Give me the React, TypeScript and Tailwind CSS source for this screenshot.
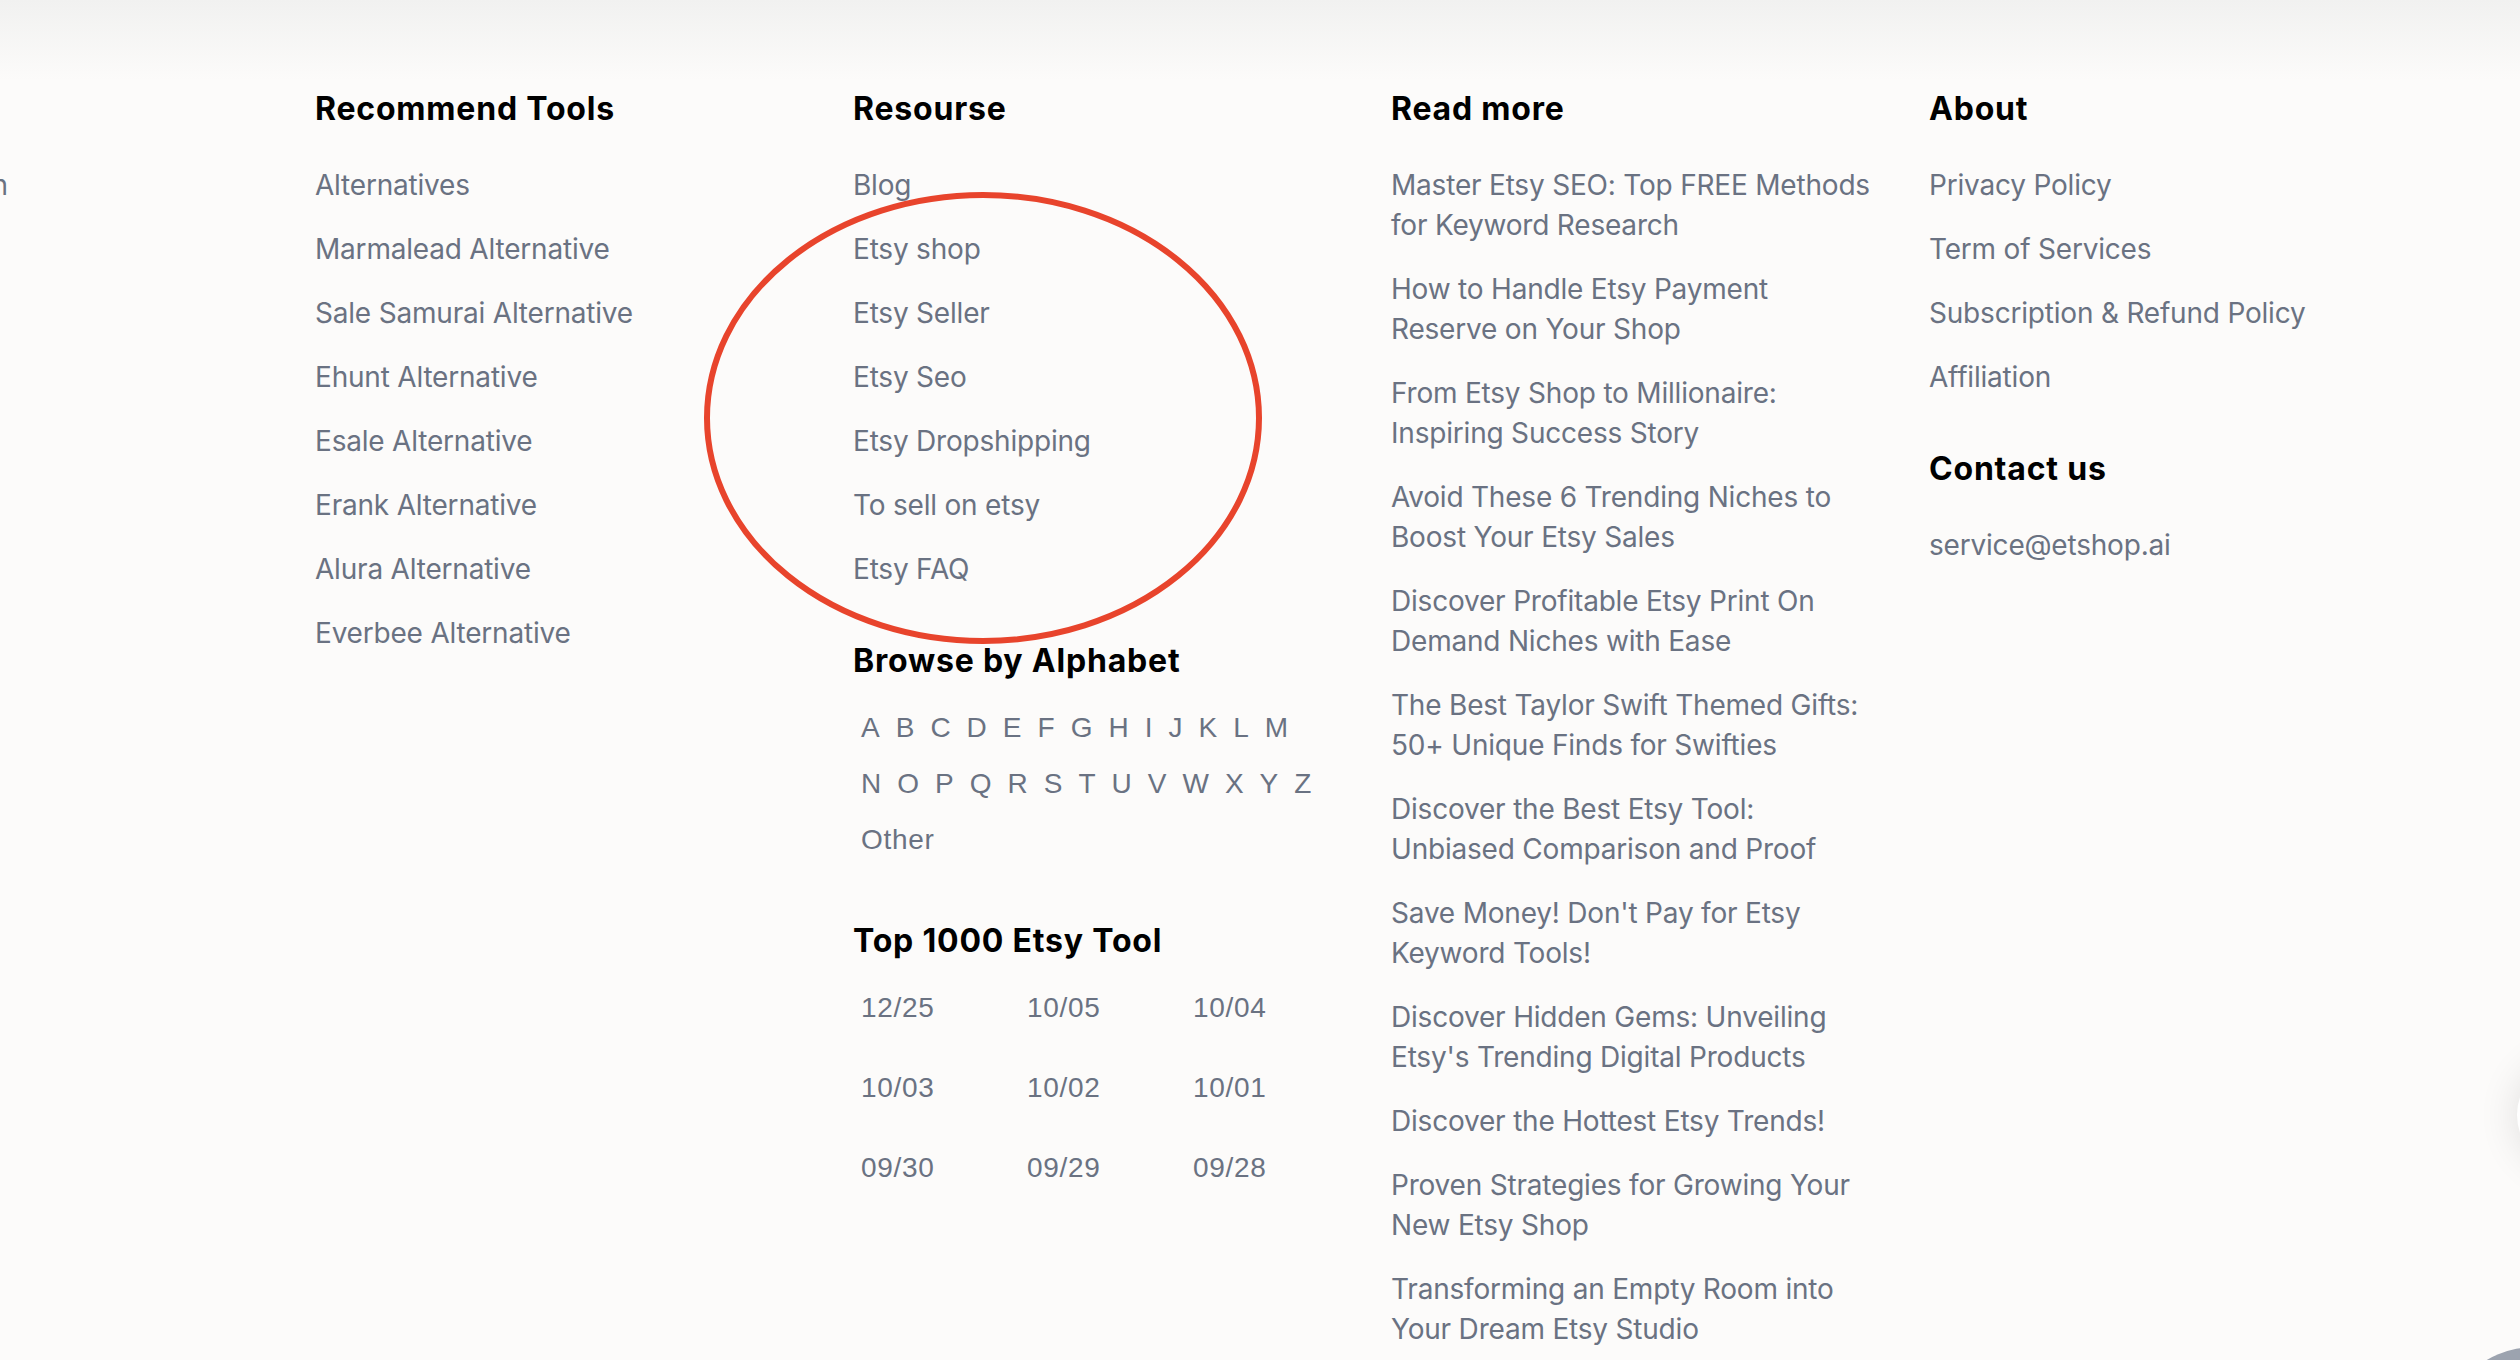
const recommend = [
  "Alternatives",
  "Marmalead Alternative",
  "Sale Samurai Alternative",
  "Ehunt Alternative",
  "Esale Alternative",
  "Erank Alternative",
  "Alura Alternative",
  "Everbee Alternative",
];

const resources = [
  "Blog",
  "Etsy shop",
  "Etsy Seller",
  "Etsy Seo",
  "Etsy Dropshipping",
  "To sell on etsy",
  "Etsy FAQ",
];

const readMore = [
  "Master Etsy SEO: Top FREE Methods for Keyword Research",
  "How to Handle Etsy Payment Reserve on Your Shop",
  "From Etsy Shop to Millionaire: Inspiring Success Story",
  "Avoid These 6 Trending Niches to Boost Your Etsy Sales",
  "Discover Profitable Etsy Print On Demand Niches with Ease",
  "The Best Taylor Swift Themed Gifts: 50+ Unique Finds for Swifties",
  "Discover the Best Etsy Tool: Unbiased Comparison and Proof",
  "Save Money! Don't Pay for Etsy Keyword Tools!",
  "Discover Hidden Gems: Unveiling Etsy's Trending Digital Products",
  "Discover the Hottest Etsy Trends!",
  "Proven Strategies for Growing Your New Etsy Shop",
  "Transforming an Empty Room into Your Dream Etsy Studio",
];

const about = [
  "Privacy Policy",
  "Term of Services",
  "Subscription & Refund Policy",
  "Affiliation",
];

const letterRows = ["ABCDEFGHIJKLM".split(""), "NOPQRSTUVWXYZ".split("")];

const dates = [
  "12/25",
  "10/05",
  "10/04",
  "10/03",
  "10/02",
  "10/01",
  "09/30",
  "09/29",
  "09/28",
];

function Heading({ children }: { children: React.ReactNode }) {
  return (
    <h3 className="text-[32px] leading-[40px] font-bold tracking-wide text-black">
      {children}
    </h3>
  );
}

function LinkList({ items, className = "" }: { items: string[]; className?: string }) {
  return (
    <ul className={"mt-[36px] flex flex-col gap-6 " + className}>
      {items.map((item) => (
        <li key={item}>
          <a
            href="#"
            className="text-[28px] leading-[40px] tracking-[-0.2px] text-gray-500 hover:text-gray-800"
          >
            {item}
          </a>
        </li>
      ))}
    </ul>
  );
}

export default function App() {
  return (
    <div className="relative h-[1360px] w-full overflow-hidden bg-[#fcfbfa] font-[Inter,sans-serif]">
      <div className="pointer-events-none absolute inset-x-0 top-0 h-[80px] bg-linear-to-b from-[#f1f1f0] to-transparent" />

      <footer className="-ml-[223px] flex pt-[89px]">
        {/* column cut off at the left edge */}
        <div className="w-[538px] shrink-0">
          <div className="mt-[76px] w-[231px] text-right text-[28px] leading-[40px] text-gray-500">
            Login
          </div>
        </div>

        <div className="w-[538px] shrink-0">
          <Heading>Recommend Tools</Heading>
          <LinkList items={recommend} />
        </div>

        <div className="w-[538px] shrink-0">
          <Heading>Resourse</Heading>
          <LinkList items={resources} />

          <div className="mt-[52px]">
            <Heading>Browse by Alphabet</Heading>
          </div>
          <div className="mt-[27px] flex flex-col gap-4 font-['Liberation_Sans',Arial,sans-serif] text-[28px] leading-[40px] text-gray-500">
            {letterRows.map((row, i) => (
              <div key={i} className="flex">
                {row.map((l) => (
                  <a key={l} href="#" className="px-2">
                    {l}
                  </a>
                ))}
              </div>
            ))}
            <div>
              <a href="#" className="px-2 tracking-wide">
                Other
              </a>
            </div>
          </div>

          <div className="mt-[61px]">
            <Heading>Top 1000 Etsy Tool</Heading>
          </div>
          <div className="mt-[27px] grid grid-cols-[166px_166px_166px] gap-y-10 font-['Liberation_Sans',Arial,sans-serif] text-[28px] leading-[40px] tracking-wide text-gray-500">
            {dates.map((d) => (
              <a key={d} href="#" className="px-2">
                {d}
              </a>
            ))}
          </div>
        </div>

        <div className="w-[538px] shrink-0">
          <Heading>Read more</Heading>
          <LinkList items={readMore} className="w-[482px]" />
        </div>

        <div className="w-[538px] shrink-0">
          <Heading>About</Heading>
          <LinkList items={about} />
          <div className="mt-[52px]">
            <Heading>Contact us</Heading>
          </div>
          <div className="mt-[36px] text-[28px] leading-[40px] tracking-[-0.2px] text-gray-500">
            service@etshop.ai
          </div>
        </div>
      </footer>

      {/* red annotation ring */}
      <svg
        className="pointer-events-none absolute left-[700px] top-[189px]"
        width="566"
        height="458"
        viewBox="0 0 566 458"
      >
        <ellipse cx="283" cy="229" rx="276" ry="223" fill="none" stroke="#e8442c" strokeWidth="6" />
      </svg>

      {/* floating buttons at the right edge */}
      <div className="absolute left-[2517px] top-[1060px] h-[110px] w-[110px] rounded-full bg-white shadow-[0_0_40px_rgba(0,0,0,0.12)]" />
      <div className="absolute left-[2439px] top-[1347px] h-[192px] w-[192px] rounded-full bg-[#9ca3af]" />
    </div>
  );
}
